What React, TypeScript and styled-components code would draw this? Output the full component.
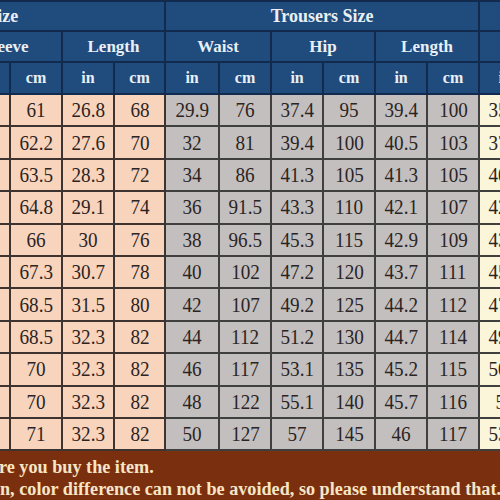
import * as React from "react";
import styled, { createGlobalStyle } from "styled-components";

const GlobalStyle = createGlobalStyle`
  html, body {
    margin: 0;
    padding: 0;
    background: #7a2f0f;
  }
  body {
    font-family: "Liberation Serif", "Times New Roman", serif;
  }
`;

// column widths, the first three sit off the left edge of the picture
const cols = [57, 52, 52, 52, 52, 52, 51, 54, 52, 52, 52, 52, 52, 52];
const tones: Tone[] = [
  "peach", "peach", "peach", "peach", "peach", "peach", "peach",
  "gray", "gray", "gray", "gray", "gray", "gray",
  "cream",
];

type Tone = "peach" | "gray" | "cream";

const toneColor: Record<Tone, string> = {
  peach: "#f9d4bd",
  gray: "#c3bfbf",
  cream: "#fbf5da",
};

// the leading columns are cropped away in the picture, so they stay blank
const rows: string[][] = [
  ["", "", "", "", "61", "26.8", "68", "29.9", "76", "37.4", "95", "39.4", "100", "35.4"],
  ["", "", "", "", "62.2", "27.6", "70", "32", "81", "39.4", "100", "40.5", "103", "37.4"],
  ["", "", "", "", "63.5", "28.3", "72", "34", "86", "41.3", "105", "41.3", "105", "40.2"],
  ["", "", "", "", "64.8", "29.1", "74", "36", "91.5", "43.3", "110", "42.1", "107", "42.1"],
  ["", "", "", "", "66", "30", "76", "38", "96.5", "45.3", "115", "42.9", "109", "43.7"],
  ["", "", "", "", "67.3", "30.7", "78", "40", "102", "47.2", "120", "43.7", "111", "45.7"],
  ["", "", "", "", "68.5", "31.5", "80", "42", "107", "49.2", "125", "44.2", "112", "47.6"],
  ["", "", "", "", "68.5", "32.3", "82", "44", "112", "51.2", "130", "44.7", "114", "49.2"],
  ["", "", "", "", "70", "32.3", "82", "46", "117", "53.1", "135", "45.2", "115", "50.4"],
  ["", "", "", "", "70", "32.3", "82", "48", "122", "55.1", "140", "45.7", "116", "52"],
  ["", "", "", "", "71", "32.3", "82", "50", "127", "57", "145", "46", "117", "53.5"],
];

const Page = styled.div`
  width: 500px;
  height: 500px;
  overflow: hidden;
  display: flex;
  flex-direction: column;
  background: #7a2f0f;
`;

const Sheet = styled.table`
  margin-left: -204px;
  width: ${cols.reduce((a, b) => a + b, 0)}px;
  table-layout: fixed;
  border-collapse: collapse;
  flex: none;
`;

const HeadRow = styled.tr<{ $h: number }>`
  height: ${(p) => p.$h}px;
  background: #1f4b7d;
`;

const HeadCell = styled.th<{ $size: number; $pullLeft?: number }>`
  padding: 0 ${(p) => p.$pullLeft ?? 0}px 0 0;
  border: 2px solid #112a4d;
  color: #e9eff5;
  font-weight: bold;
  font-size: ${(p) => p.$size}px;
  line-height: 1;
  text-align: center;
  vertical-align: middle;
  white-space: nowrap;
  overflow: hidden;
`;

const DataRow = styled.tr`
  height: 32.4px;
`;

const DataCell = styled.td<{ $tone: Tone }>`
  padding: 0;
  background: ${(p) => toneColor[p.$tone]};
  border: 2px solid ${(p) => (p.$tone === "peach" ? "#3d3330" : "#3f3f3f")};
  color: #2b2423;
  text-align: center;
  vertical-align: middle;
  white-space: nowrap;
  overflow: hidden;
`;

const Num = styled.span`
  display: inline-block;
  font-size: 22px;
  line-height: 1;
  transform: scaleX(0.87);
`;

const Footer = styled.div`
  flex: 1;
  display: flex;
  flex-direction: column;
  padding-top: 6px;
  gap: 2px;
`;

const FooterLine = styled.div<{ $indent: number }>`
  margin-left: ${(p) => p.$indent}px;
  color: #f6e6c6;
  font-weight: bold;
  font-size: 18.2px;
  line-height: 20px;
  white-space: nowrap;
`;

export default function App() {
  const sub = ["", "", "", "cm", "in", "cm", "in", "cm", "in", "cm", "in", "cm", "in"];
  return (
    <>
      <GlobalStyle />
      <Page>
        <Sheet>
          <colgroup>
            {cols.map((w, i) => (
              <col key={i} style={{ width: w }} />
            ))}
          </colgroup>
          <thead>
            <HeadRow $h={30}>
              <HeadCell $size={18} colSpan={7}>Shirt Size</HeadCell>
              <HeadCell $size={18} colSpan={6}>Trousers Size</HeadCell>
              <HeadCell $size={18} />
            </HeadRow>
            <HeadRow $h={31}>
              <HeadCell $size={17} rowSpan={2} />
              <HeadCell $size={17} colSpan={2} />
              <HeadCell $size={17} colSpan={2} $pullLeft={8}>Sleeve</HeadCell>
              <HeadCell $size={17} colSpan={2}>Length</HeadCell>
              <HeadCell $size={17} colSpan={2}>Waist</HeadCell>
              <HeadCell $size={17} colSpan={2}>Hip</HeadCell>
              <HeadCell $size={17} colSpan={2}>Length</HeadCell>
              <HeadCell $size={17} />
            </HeadRow>
            <HeadRow $h={32}>
              {sub.map((s, i) => (
                <HeadCell key={i} $size={16}>{s}</HeadCell>
              ))}
            </HeadRow>
          </thead>
          <tbody>
            {rows.map((r, ri) => (
              <DataRow key={ri}>
                {r.map((v, ci) => (
                  <DataCell key={ci} $tone={tones[ci]}>
                    <Num>{v}</Num>
                  </DataCell>
                ))}
              </DataRow>
            ))}
          </tbody>
        </Sheet>
        <Footer>
          <FooterLine $indent={-1}>re you buy the item.</FooterLine>
          <FooterLine $indent={0}>n, color difference can not be avoided, so please understand that.</FooterLine>
        </Footer>
      </Page>
    </>
  );
}
